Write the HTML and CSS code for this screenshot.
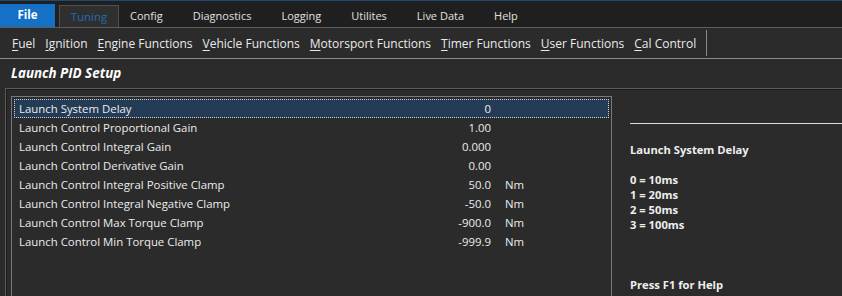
FILE: index.html
```html
<!DOCTYPE html>
<html lang="en">
<head>
    <meta charset="UTF-8">
    <meta name="viewport" content="width=device-width, initial-scale=1.0">
    <title>Launch PID Setup</title>
    <link rel="stylesheet" href="styles.css">
</head>
<body>
    <div class="tabs">
        <div class="tab file">File</div>
        <div class="tab active">Tuning</div>
        <div class="tab">Config</div>
        <div class="tab">Diagnostics</div>
        <div class="tab">Logging</div>
        <div class="tab">Utilites</div>
        <div class="tab">Live Data</div>
        <div class="tab">Help</div>
    </div>

    <div class="menubar">
        <span class="menu-item"><u>F</u>uel</span>
        <span class="menu-item"><u>I</u>gnition</span>
        <span class="menu-item"><u>E</u>ngine Functions</span>
        <span class="menu-item"><u>V</u>ehicle Functions</span>
        <span class="menu-item"><u>M</u>otorsport Functions</span>
        <span class="menu-item"><u>T</u>imer Functions</span>
        <span class="menu-item"><u>U</u>ser Functions</span>
        <span class="menu-item"><u>C</u>al Control</span>
        <span class="menu-sep"></span>
    </div>

    <div class="page-title">Launch PID Setup</div>

    <div class="panel">
        <div class="listbox">
            <div class="row selected"><span class="name">Launch System Delay</span><span class="value">0</span><span class="unit"></span></div>
            <div class="row"><span class="name">Launch Control Proportional Gain</span><span class="value">1.00</span><span class="unit"></span></div>
            <div class="row"><span class="name">Launch Control Integral Gain</span><span class="value">0.000</span><span class="unit"></span></div>
            <div class="row"><span class="name">Launch Control Derivative Gain</span><span class="value">0.00</span><span class="unit"></span></div>
            <div class="row"><span class="name">Launch Control Integral Positive Clamp</span><span class="value">50.0</span><span class="unit">Nm</span></div>
            <div class="row"><span class="name">Launch Control Integral Negative Clamp</span><span class="value">-50.0</span><span class="unit">Nm</span></div>
            <div class="row"><span class="name">Launch Control Max Torque Clamp</span><span class="value">-900.0</span><span class="unit">Nm</span></div>
            <div class="row"><span class="name">Launch Control Min Torque Clamp</span><span class="value">-999.9</span><span class="unit">Nm</span></div>
        </div>

        <div class="help">
            <div class="help-rule"></div>
            <div class="help-title">Launch System Delay</div>
            <div class="help-body">
                0 = 10ms<br>
                1 = 20ms<br>
                2 = 50ms<br>
                3 = 100ms
            </div>
            <div class="help-foot">Press F1 for Help</div>
        </div>
    </div>
</body>
</html>
```

FILE: styles.css
```css
body {
    margin: 0;
    width: 842px;
    height: 296px;
    overflow: hidden;
    background: #2b2b2b;
    color: #ececec;
    font-family: 'Open Sans', 'Noto Sans', sans-serif;
    font-size: 11.4px;
}

/* barra de pestañas */
.tabs {
    display: flex;
    align-items: flex-end;
    height: 24px;
    padding-top: 2px;
    background: #1f1f1f;
    border-top: 1px solid #1d4a74;
    border-bottom: 1px solid #5c5c5c;
}

.tab {
    height: 22px;
    line-height: 22px;
    padding: 0 15px;
    color: #e0e0e0;
    font-size: 11px;
}

.tab.file {
    width: 55px;
    height: 23px;
    padding: 0;
    text-align: center;
    background: #1571c6;
    color: #fff;
    font-weight: bold;
    font-size: 11.5px;
    margin-right: 4px;
}

.tab.active {
    box-sizing: border-box;
    width: 60px;
    padding: 0;
    text-align: center;
    background: #2f2f2f;
    border: 1px solid #4f4f4f;
    border-bottom: none;
    color: #1f6db3;
    font-size: 11.5px;
    margin-right: -4px;
}

/* menú */
.menubar {
    display: flex;
    align-items: center;
    height: 30px;
    padding-left: 12px;
    background: #2b2b2b;
    border-bottom: 1px solid #8a8a8a;
    font-size: 12px;
}

.menu-item {
    margin-right: 10px;
    color: #eaeaea;
}

.menu-item u {
    text-underline-offset: 2px;
}

.menu-sep {
    width: 1px;
    height: 26px;
    background: #8a8a8a;
}

.page-title {
    height: 29px;
    line-height: 29px;
    padding-left: 11px;
    font-size: 13.4px;
    font-weight: bold;
    font-style: italic;
    color: #fff;
}

.panel {
    display: flex;
    margin-left: 5px;
    height: 220px;
    border-top: 1px solid #5a5a5a;
    border-left: 1px solid #5a5a5a;
    box-shadow: inset 1px 1px 0 #1c1c1c;
}

.listbox {
    width: 595px;
    margin: 7px 0 0 5px;
    padding: 2px;
    border: 1px solid #7a7a7a;
    border-bottom: none;
}

.row {
    display: flex;
    height: 19px;
    line-height: 18px;
    box-sizing: border-box;
    border: 1px dotted transparent;
}

.row.selected {
    background: #243b56;
    border-color: #c8d2dc;
}

.name {
    width: 420px;
    padding-left: 4px;
}

.value {
    width: 52px;
    text-align: right;
}

.unit {
    padding-left: 14px;
}

/* panel de ayuda */
.help {
    flex: 1;
    padding: 34px 0 0 18px;
    font-weight: bold;
    font-size: 11.2px;
    color: #eeeeee;
}

.help-rule {
    height: 1px;
    background: #dcdcdc;
    margin-bottom: 18px;
}

.help-title {
    margin-bottom: 15px;
}

.help-body {
    line-height: 15px;
}

.help-foot {
    margin-top: 45px;
}
```
